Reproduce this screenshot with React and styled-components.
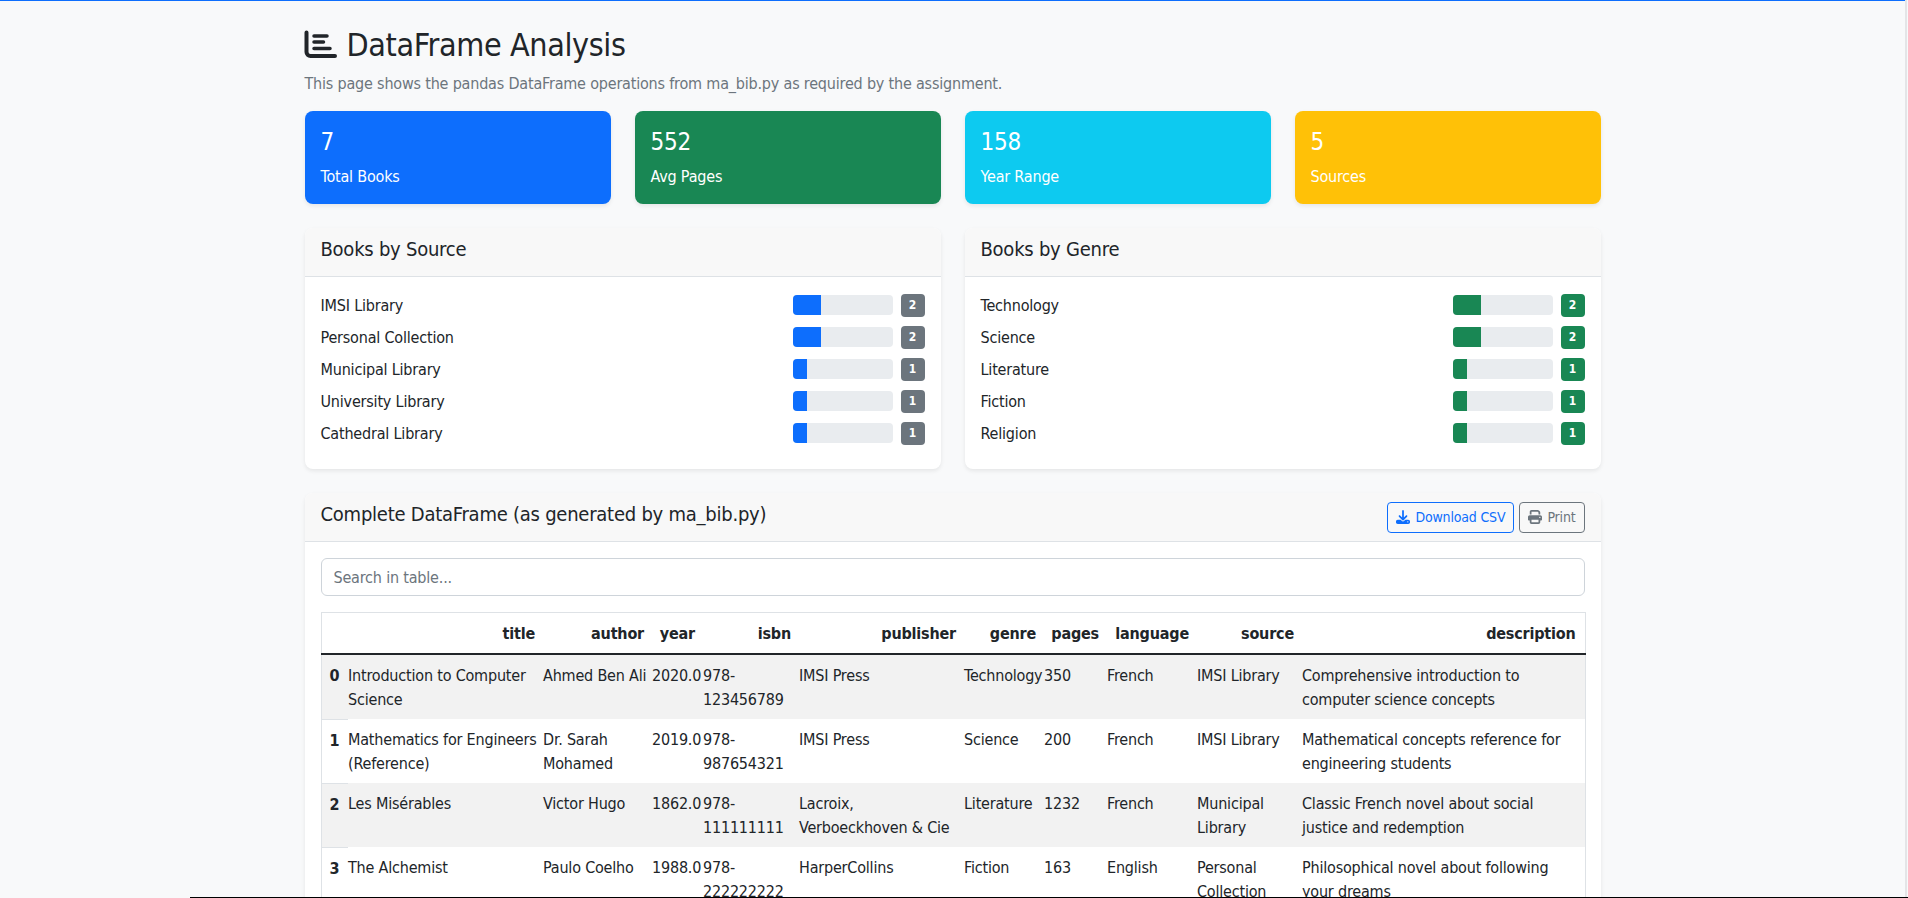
import React from "react"
import styled, { createGlobalStyle } from "styled-components"
import { FaDownload, FaPrint } from "react-icons/fa6"

const GlobalStyle = createGlobalStyle`
  html, body { margin: 0; height: 898px; overflow: hidden; }
  body {
    background: #f8f9fa;
    color: #212529;
    font-family: "DejaVu Sans Condensed", "DejaVu Sans", sans-serif;
    font-stretch: condensed;
    font-size: 16px;
    line-height: 1.5;
  }
  * { letter-spacing: -0.012em; }
`
const Shell = styled.div`
  display: flex;
  height: 898px;
  overflow: hidden;
`
const Gutter = styled.div`
  width: 3px;
  box-sizing: border-box;
  border-left: 2px solid #e4e5e7;
`
const Page = styled.div`
  flex: 1;
  min-width: 0;
`
const TopLine = styled.div`
  height: 1px;
  background: #0d6efd;
`
const BottomLine = styled.div`
  position: fixed;
  left: 190px;
  right: 0;
  bottom: 0;
  height: 1px;
  background: #000;
`
const Container = styled.main`
  width: 1296px;
  margin: 0 auto;
  padding-top: 25px;
`
const Title = styled.h1`
  display: flex;
  align-items: center;
  gap: 10px;
  margin: 0 0 8px;
  font-size: 32px;
  font-weight: 400;
  line-height: 1.2;
`
const TitleIcon = styled.svg`
  display: block;
  width: 33px;
  height: 29px;
  margin: -1px 0 0 -1px;
`
const Lead = styled.p`
  margin: 0 0 15px;
  color: #6c757d;
`
const StatGrid = styled.section`
  display: grid;
  grid-template-columns: repeat(4, 1fr);
  gap: 24px;
  margin-bottom: 24px;
`
const StatCard = styled.div`
  height: 93px;
  padding: 17px 16px 15px;
  box-sizing: border-box;
  border-radius: 8px;
  color: #fff;
  background: ${props => props.color};
  box-shadow: 0 2px 4px rgba(0, 0, 0, 0.08);
`
const StatValue = styled.div`
  font-size: 24px;
  line-height: 1.2;
  margin-bottom: 8px;
`
const StatLabel = styled.div`
  font-size: 16px;
`
const ChartGrid = styled.section`
  display: grid;
  grid-template-columns: 1fr 1fr;
  gap: 24px;
  margin-bottom: 24px;
`
const Card = styled.div`
  background: #fff;
  border-radius: 8px;
  box-shadow: 0 2px 4px rgba(0, 0, 0, 0.08);
  overflow: hidden;
`
const CardHeader = styled.header`
  display: flex;
  align-items: center;
  justify-content: space-between;
  height: 49px;
  box-sizing: border-box;
  padding: 0 16px;
  background: #f8f8f8;
  border-bottom: 1px solid #dee2e6;
`
const CardTitle = styled.h2`
  margin: 0;
  padding-bottom: 7px;
  font-size: 20px;
  font-weight: 400;
  line-height: 1.2;
`
const CardBody = styled.div`
  padding: 16px;
`
const BarRow = styled.div`
  display: flex;
  align-items: center;
  height: 24px;
  margin-bottom: 8px;
  font-size: 16px;
`
const BarName = styled.span`
  flex: 1;
  padding-top: 2px;
`
const BarTrack = styled.div`
  width: 100px;
  height: 20px;
  border-radius: 4px;
  background: #e9ecef;
  overflow: hidden;
  margin-right: 8px;
`
const BarFill = styled.div`
  height: 100%;
  background: ${props => props.color};
`
const Badge = styled.span`
  width: 24px;
  height: 23px;
  border-radius: 4px;
  color: #fff;
  font-size: 12px;
  font-weight: 700;
  line-height: 23px;
  text-align: center;
  background: ${props => props.color};
`
const Actions = styled.div`
  display: flex;
  gap: 5px;
`
const ActionButton = styled.button`
  display: flex;
  align-items: center;
  gap: 5px;
  height: 31px;
  padding: 0 8px;
  border: 1px solid ${props => props.color};
  border-radius: 4px;
  background: transparent;
  color: ${props => props.color};
  font-family: inherit;
  font-stretch: inherit;
  font-size: 14px;
`
const SearchInput = styled.input`
  display: block;
  width: 100%;
  height: 38px;
  box-sizing: border-box;
  margin-bottom: 16px;
  padding: 6px 12px;
  border: 1px solid #ced4da;
  border-radius: 6px;
  font-family: inherit;
  font-stretch: inherit;
  font-size: 16px;
  &::placeholder { color: #6c757d; }
`
const Table = styled.table`
  width: 1264px;
  table-layout: fixed;
  border-collapse: collapse;
  border: 1px solid #dee2e6;
`
const Col = styled.col`
  width: ${props => props.$w};
`
const HeadCell = styled.th`
  padding: 9px 8px 7px 0;
  text-align: right;
  border-bottom: 2px solid #212529;
  &:last-child { padding-right: 9px; }
`
const IndexCell = styled.th`
  padding: 9px 8px 7px;
  text-align: left;
  vertical-align: top;
  border-bottom: 1px solid #dee2e6;
`
const Cell = styled.td`
  padding: 9px 4px 7px 0;
  vertical-align: top;
  &:last-child { padding-right: 10px; }
`
const Row = styled.tr`
  background: ${props => (props.$striped ? "#f2f2f2" : "#fff")};
`

const sources = [["IMSI Library", 2], ["Personal Collection", 2], ["Municipal Library", 1], ["University Library", 1], ["Cathedral Library", 1]]
const genres = [["Technology", 2], ["Science", 2], ["Literature", 1], ["Fiction", 1], ["Religion", 1]]
const columns = ["title", "author", "year", "isbn", "publisher", "genre", "pages", "language", "source", "description"]
const widths = ["27px", "195px", "109px", "51px", "96px", "165px", "80px", "63px", "90px", "105px", "283px"]
const rows = [
  ["Introduction to Computer Science", "Ahmed Ben Ali", "2020.0", "978-123456789", "IMSI Press", "Technology", "350", "French", "IMSI Library", "Comprehensive introduction to computer science concepts"],
  ["Mathematics for Engineers (Reference)", "Dr. Sarah Mohamed", "2019.0", "978-987654321", "IMSI Press", "Science", "200", "French", "IMSI Library", "Mathematical concepts reference for engineering students"],
  ["Les Misérables", "Victor Hugo", "1862.0", "978-111111111", "Lacroix, Verboeckhoven & Cie", "Literature", "1232", "French", "Municipal Library", "Classic French novel about social justice and redemption"],
  ["The Alchemist", "Paulo Coelho", "1988.0", "978-222222222", "HarperCollins", "Fiction", "163", "English", "Personal Collection", "Philosophical novel about following your dreams"],
]

const BarList = ({ items, fill, badge }) => (
  <CardBody>
    {items.map(([name, count]) => (
      <BarRow key={name}>
        <BarName>{name}</BarName>
        <BarTrack>
          <BarFill color={fill} style={{ width: `${count * 14.3}%` }} />
        </BarTrack>
        <Badge color={badge}>{count}</Badge>
      </BarRow>
    ))}
  </CardBody>
)

export default function App() {
  return (
    <>
      <GlobalStyle />
      <Shell>
        <Page>
          <TopLine />
          <Container>
            <Title>
              <TitleIcon viewBox="0 0 33 29" fill="none" stroke="currentColor" strokeLinecap="round" strokeLinejoin="round">
                <path d="M2.5 2.5V22a4 4 0 0 0 4 4H31" strokeWidth="4" />
                <path d="M10 6H23M10 12H19.5M10 18.5H26" strokeWidth="3.5" />
              </TitleIcon>
              DataFrame Analysis
            </Title>
            <Lead>This page shows the pandas DataFrame operations from ma_bib.py as required by the assignment.</Lead>
            <StatGrid>
              <StatCard color="#0d6efd"><StatValue>7</StatValue><StatLabel>Total Books</StatLabel></StatCard>
              <StatCard color="#198754"><StatValue>552</StatValue><StatLabel>Avg Pages</StatLabel></StatCard>
              <StatCard color="#0dcaf0"><StatValue>158</StatValue><StatLabel>Year Range</StatLabel></StatCard>
              <StatCard color="#ffc107"><StatValue>5</StatValue><StatLabel>Sources</StatLabel></StatCard>
            </StatGrid>
            <ChartGrid>
              <Card><CardHeader><CardTitle>Books by Source</CardTitle></CardHeader><BarList items={sources} fill="#0d6efd" badge="#6c757d" /></Card>
              <Card><CardHeader><CardTitle>Books by Genre</CardTitle></CardHeader><BarList items={genres} fill="#198754" badge="#198754" /></Card>
            </ChartGrid>
            <Card>
              <CardHeader>
                <CardTitle>Complete DataFrame (as generated by ma_bib.py)</CardTitle>
                <Actions>
                  <ActionButton color="#0d6efd"><FaDownload /> Download CSV</ActionButton>
                  <ActionButton color="#6c757d"><FaPrint /> Print</ActionButton>
                </Actions>
              </CardHeader>
              <CardBody>
                <SearchInput placeholder="Search in table..." />
                <Table>
                  <colgroup>
                    {widths.map((w, i) => <Col key={i} $w={w} />)}
                  </colgroup>
                  <thead>
                    <tr>
                      <HeadCell />
                      {columns.map(c => <HeadCell key={c}>{c}</HeadCell>)}
                    </tr>
                  </thead>
                  <tbody>
                    {rows.map((row, i) => (
                      <Row key={row[0]} $striped={i % 2 === 0}>
                        <IndexCell>{i}</IndexCell>
                        {row.map((v, j) => <Cell key={j}>{v}</Cell>)}
                      </Row>
                    ))}
                  </tbody>
                </Table>
              </CardBody>
            </Card>
          </Container>
        </Page>
        <Gutter />
      </Shell>
      <BottomLine />
    </>
  )
}
